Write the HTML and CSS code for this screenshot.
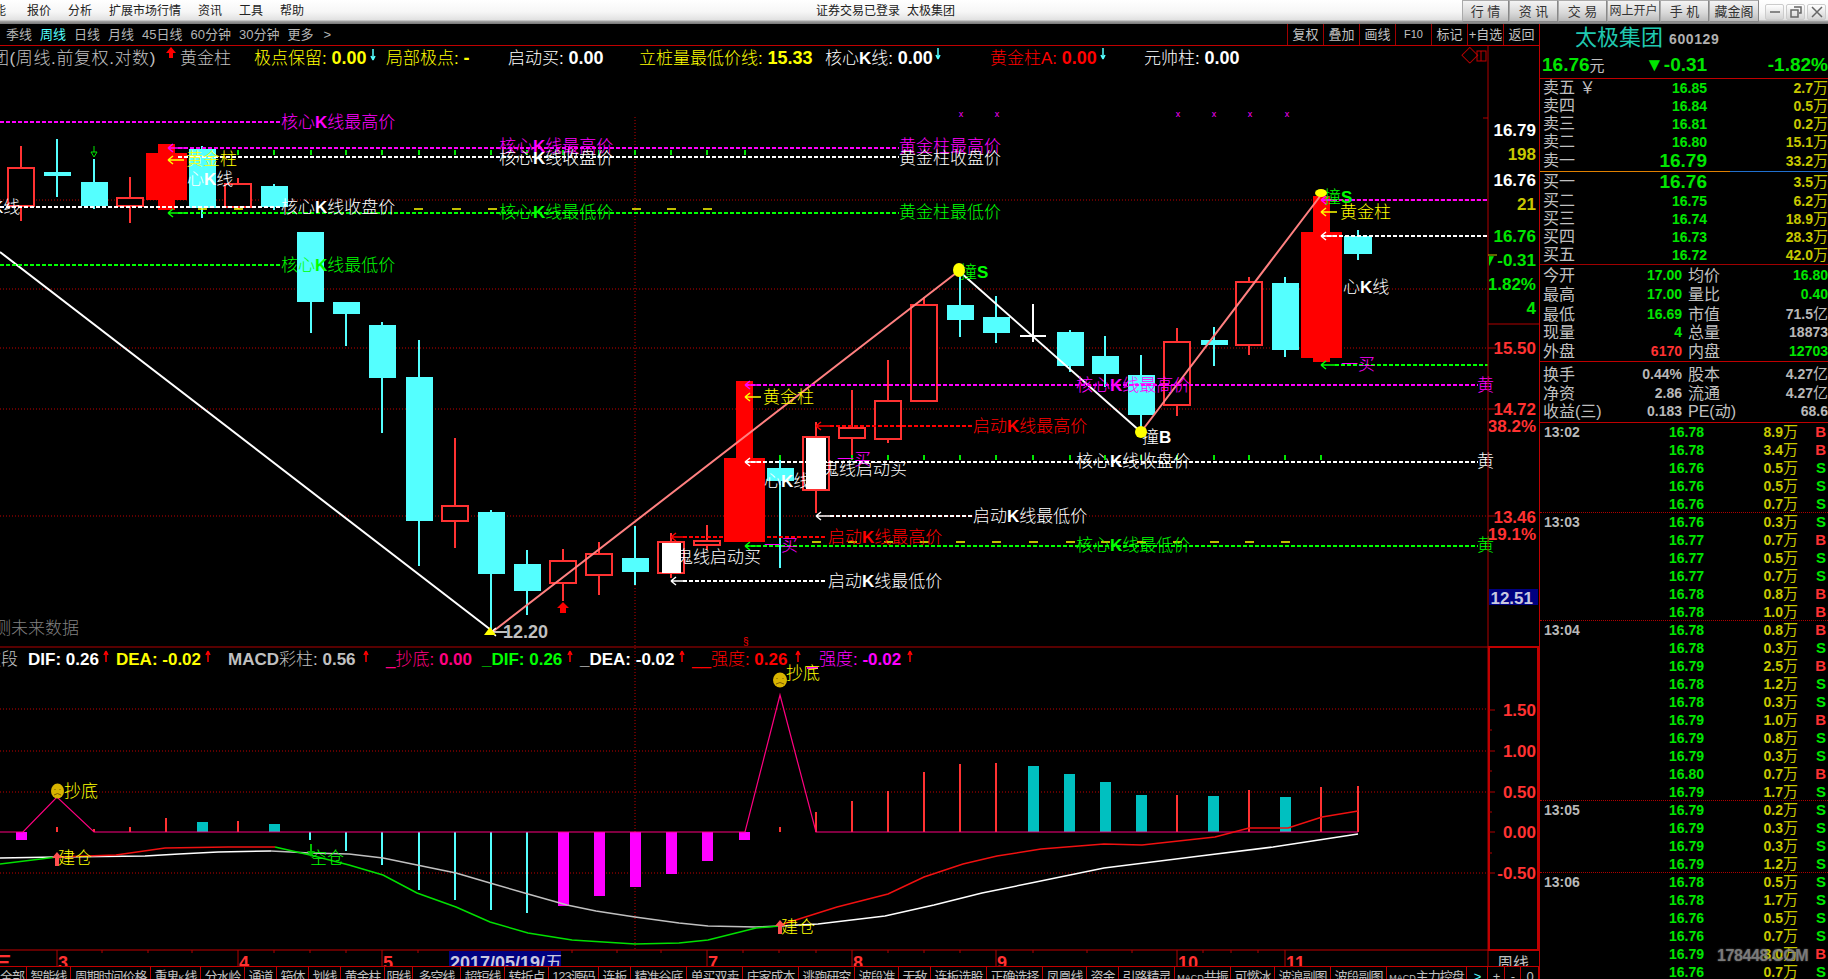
FILE: index.html
```html
<!DOCTYPE html>
<html lang="zh">
<head>
<meta charset="utf-8">
<title>太极集团</title>
<link rel="stylesheet" href="styles.css">
</head>
<body>
<div class="app">
  <header class="titlebar">
    <nav class="menu"><span class="first">功能</span><span>报价</span><span>分析</span><span>扩展市场行情</span><span>资讯</span><span>工具</span><span>帮助</span></nav>
    <div class="wintitle"><span>证券交易已登录</span><span>太极集团</span></div>
    <div class="tbtns">
      <span class="tb w47">行 情</span><span class="tb w49">资 讯</span><span class="tb w49">交 易</span><span class="tb w53">网上开户</span><span class="tb w49">手 机</span><span class="tb w50">藏金阁</span>
    </div>
    <div class="wbtns">
      <span class="wb"><svg width="12" height="12" viewBox="0 0 12 12"><path d="M1 6h10" class="wi"/></svg></span>
      <span class="wb"><svg width="12" height="12" viewBox="0 0 12 12"><path d="M4 1h7v6h-2M1 4h7v7H1z" class="wi"/></svg></span>
      <span class="wb"><svg width="12" height="12" viewBox="0 0 12 12"><path d="M1 1l10 10M11 1L1 11" class="wi"/></svg></span>
    </div>
  </header>
  <div class="body">
    <main class="left">
      <div class="toolbar">
        <div class="periods"><span>季线</span><span class="on">周线</span><span>日线</span><span>月线</span><span>45日线</span><span>60分钟</span><span>30分钟</span><span>更多</span><span class="more">&gt;</span></div>
        <div class="tools"><span>复权</span><span>叠加</span><span>画线</span><span class="f10">F10</span><span>标记</span><span>+自选</span><span>返回</span></div>
      </div>
      <svg class="chart" width="1539" height="920" viewBox="0 46 1539 920">
        <defs>
          <symbol id="al" overflow="visible"><path d="M0 0h16M0 0l5-4M0 0l5 4"/></symbol>
          <symbol id="au" overflow="visible"><path d="M0 0v-11M0-11l-2 4M0-11l2 4"/></symbol>
          <symbol id="ad" overflow="visible"><path d="M0 0v11M0 11l-2-4M0 11l2-4"/></symbol>
        </defs>
        <!-- grid -->
        <path class="grid" d="M0 200H1488M0 289H1488M0 348H1488M0 409H1488M0 516H1488M0 709H1488M0 751H1488M0 792H1488M0 873H1488M635 117V950"/>
        <!-- red and cyan wicks -->
        <path class="wu" d="M21 146V221M130 177V223M238 178V209M455 438V548M563 549V601M599 542V595M671 533V578M707 525V550M816 422V513M852 390V457M888 360V443M924 297V305M1177 328V416M1249 277V355"/>
        <path class="wd" d="M57 139V197M94 159V209M202 146V218M274 184V210M311 232V333M346 302V346M382 322V433M419 340V566M491 510V633M527 550V615M635 526V585M780 455V568M960 265V337M996 296V343M1070 330V372M1105 336V387M1141 355V428M1214 327V366M1285 277V357M1358 230V260"/>
        <g class="up">
          <rect x="8" y="168" width="26" height="38"/><rect x="117" y="198" width="26" height="8"/><rect x="225" y="184" width="26" height="23"/><rect x="442" y="506" width="26" height="15"/><rect x="550" y="561" width="26" height="22"/><rect x="586" y="554" width="26" height="21"/><rect x="658" y="542" width="26" height="31"/><rect x="694" y="541" width="26" height="4"/><rect x="803" y="437" width="26" height="53"/><rect x="839" y="428" width="26" height="10"/><rect x="875" y="401" width="26" height="38"/><rect x="911" y="305" width="26" height="96"/><rect x="1164" y="342" width="26" height="63"/><rect x="1236" y="282" width="26" height="63"/>
        </g>
        <g class="dn">
          <rect x="44" y="172" width="27" height="4"/><rect x="81" y="182" width="27" height="24"/><rect x="189" y="149" width="27" height="59"/><rect x="261" y="186" width="27" height="21"/><rect x="297" y="232" width="27" height="70"/><rect x="333" y="302" width="27" height="12"/><rect x="369" y="325" width="27" height="53"/><rect x="406" y="377" width="27" height="144"/><rect x="478" y="512" width="27" height="62"/><rect x="514" y="564" width="27" height="27"/><rect x="622" y="558" width="27" height="14"/><rect x="767" y="468" width="27" height="13"/><rect x="947" y="305" width="27" height="15"/><rect x="983" y="317" width="27" height="16"/><rect x="1057" y="332" width="27" height="34"/><rect x="1092" y="356" width="27" height="18"/><rect x="1128" y="375" width="27" height="40"/><rect x="1201" y="340" width="27" height="5"/><rect x="1272" y="283" width="27" height="67"/><rect x="1344" y="236" width="28" height="18"/>
        </g>
        <g class="wfill"><rect x="662" y="543" width="19" height="30"/><rect x="806" y="438" width="20" height="51"/></g>
        <path class="wcross" d="M1033 304V342M1020 336H1046"/>
        <g class="rfill">
          <rect x="146" y="153" width="41" height="47"/><rect x="158" y="144" width="17" height="66"/>
          <rect x="724" y="458" width="41" height="84"/><rect x="736" y="381" width="17" height="77"/>
          <rect x="1301" y="232" width="41" height="126"/><rect x="1313" y="196" width="17" height="36"/><rect x="1313" y="358" width="17" height="4"/>
        </g>
        <!-- small marks -->
        <path class="gticks" d="M238 150v5M274 150v5M311 150v5M346 150v5M382 150v5M419 150v5M455 150v5M491 150v5M527 150v5M563 150v5M599 150v5M635 150v5M671 150v5M707 150v5M745 150v5M780 455v5M852 455v5M888 455v5M924 455v5M960 455v5M996 455v5M1033 455v5M1070 455v5M1105 455v5M1141 455v5M1177 455v5M1214 455v5M1249 455v5M1285 455v5M1321 455v5"/>
        <path class="ydash" d="M198 209h9M234 209h9M414 209h9M452 209h9M488 209h9M632 209h9M667 209h9M703 209h9M812 542h9M848 542h9M884 542h9M920 542h9M956 542h9M992 542h9M1029 542h9M1066 542h9M1101 542h9M1137 542h9M1173 542h9M1210 542h9M1245 542h9M1281 542h9"/>
        <g class="xm"><text x="961" y="117">x</text><text x="997" y="117">x</text><text x="1178" y="117">x</text><text x="1214" y="117">x</text><text x="1250" y="117">x</text><text x="1287" y="117">x</text></g>
        <path class="gwk" d="M94 146v6h-3l3 5 3-5h-3"/>
        <polygon class="rarrow" points="563,602 569,608 566,608 566,613 560,613 560,608 557,608"/>
        <!-- trend lines -->
        <path class="tw" d="M0 252L491 630M960 272L1141 432"/>
        <path class="ts" d="M491 633L960 270M1141 432L1321 195"/>
        <!-- level lines -->
        <path class="dm" d="M0 122H280M178 148H899M745 385H1478M1321 200H1488"/>
        <path class="dw" d="M0 207H280M178 157H899M745 462H1478M1321 236H1488M830 516H972M683 581H826"/>
        <path class="dg" d="M0 265H280M178 213H899M745 546H1478M1335 365H1488"/>
        <path class="dr" d="M830 426H972M683 537H826"/>
        <use href="#al" class="sm" x="168" y="148"/><use href="#al" class="sy" x="168" y="160"/><use href="#al" class="sg" x="168" y="213"/>
        <use href="#al" class="sm" x="745" y="385"/><use href="#al" class="sy" x="745" y="397"/><use href="#al" class="sw" x="745" y="462"/><use href="#al" class="sg" x="745" y="546"/>
        <use href="#al" class="sr" x="816" y="426"/><use href="#al" class="sw" x="816" y="516"/><use href="#al" class="sr" x="671" y="537"/><use href="#al" class="sw" x="671" y="581"/>
        <use href="#al" class="sm" x="1321" y="200"/><use href="#al" class="sy" x="1321" y="212"/><use href="#al" class="sw" x="1321" y="236"/><use href="#al" class="sg" x="1321" y="365"/>
        <use href="#al" class="sw" x="491" y="632"/>
        <!-- labels on the price chart -->
        <g class="t">
          <text class="cm" x="281" y="122">核心<tspan class="k">K</tspan>线最高价</text>
          <text class="cm" x="499" y="146">核心<tspan class="k">K</tspan>线最高价</text>
          <text class="cw" x="499" y="158">核心<tspan class="k">K</tspan>线收盘价</text>
          <text class="cw" x="281" y="207">核心<tspan class="k">K</tspan>线收盘价</text>
          <text class="cg" x="499" y="212">核心<tspan class="k">K</tspan>线最低价</text>
          <text class="cg" x="281" y="265">核心<tspan class="k">K</tspan>线最低价</text>
          <text class="cm" x="899" y="146">黄金柱最高价</text>
          <text class="cw" x="899" y="158">黄金柱收盘价</text>
          <text class="cg" x="899" y="212">黄金柱最低价</text>
          <text class="cy" x="186" y="159">黄金柱</text>
          <text class="cw" x="187" y="179">心<tspan class="k">K</tspan>线</text>
          <text class="cw" x="-8" y="207">K线</text>
          <text class="cy" x="763" y="397">黄金柱</text>
          <text class="cw" x="764" y="481">心<tspan class="k">K</tspan>线</text>
          <text class="cw" x="822" y="469">鬼线启动买</text>
          <text class="cw" x="676" y="557">鬼线启动买</text>
          <text class="cm" x="1076" y="385">核心<tspan class="k">K</tspan>线最高价</text>
          <text class="cw" x="1076" y="461">核心<tspan class="k">K</tspan>线收盘价</text>
          <text class="cg" x="1076" y="545">核心<tspan class="k">K</tspan>线最低价</text>
          <text class="cm" x="1477" y="385">黄</text>
          <text class="cw" x="1477" y="461">黄</text>
          <text class="cg" x="1477" y="545">黄</text>
          <text class="cr" x="973" y="426">启动<tspan class="k">K</tspan>线最高价</text>
          <text class="cw" x="973" y="516">启动<tspan class="k">K</tspan>线最低价</text>
          <text class="cr" x="828" y="537">启动<tspan class="k">K</tspan>线最高价</text>
          <text class="cw" x="828" y="581">启动<tspan class="k">K</tspan>线最低价</text>
          <text class="cy" x="1340" y="212">黄金柱</text>
          <text class="cw" x="1343" y="287">心<tspan class="k">K</tspan>线</text>
          <text class="cg" x="960" y="272">撞<tspan class="k">S</tspan></text>
          <text class="cg" x="1324" y="197">撞<tspan class="k">S</tspan></text>
          <text class="cw" x="1142" y="437">撞<tspan class="k">B</tspan></text>
          <text class="cm" x="837" y="459">一买</text>
          <text class="cm" x="764" y="545">一买</text>
          <text class="cm" x="1341" y="364">一买</text>
          <text class="cdim" x="-6" y="628">测未来数据</text>
          <text class="cs bold" x="503" y="632">12.20</text>
        </g>
        <g class="yd"><ellipse cx="959" cy="270" rx="6" ry="7"/><ellipse cx="1141" cy="432" rx="6" ry="6"/><ellipse cx="1321" cy="193" rx="6" ry="4"/><polygon points="490,627 496,635 484,635"/></g>
        <!-- legend of the price chart -->
        <g class="t lg">
          <text class="cs wide" x="-8" y="58">团(周线.前复权.对数)</text>
          <text class="cs" x="180" y="58">黄金柱</text>
          <text class="cy" x="254" y="58">极点保留: <tspan class="n">0.00</tspan></text>
          <text class="cy" x="386" y="58">局部极点: <tspan class="n">-</tspan></text>
          <text class="cw" x="508" y="58">启动买: <tspan class="n">0.00</tspan></text>
          <text class="cy" x="639" y="58">立桩量最低价线: <tspan class="n">15.33</tspan></text>
          <text class="cw" x="825" y="58">核心<tspan class="k">K</tspan>线: <tspan class="n">0.00</tspan></text>
          <text class="cr" x="990" y="58">黄金柱A: <tspan class="n">0.00</tspan></text>
          <text class="cw" x="1144" y="58">元帅柱: <tspan class="n">0.00</tspan></text>
          <text class="cr sym" x="1461" y="56">◇</text>
        </g>
        <rect class="rbox" x="1477" y="51" width="9" height="10"/>
        <path class="rbox" d="M1481 51v10"/>
        <polygon class="rarrow" points="171,47 176,53 173,53 173,58 169,58 169,53 166,53"/>
        <use href="#ad" class="sc" x="373" y="49"/><use href="#ad" class="sc" x="938" y="48"/><use href="#ad" class="sc" x="1103" y="48"/>

        <!-- indicator pane -->
        <path class="frame" d="M0 647H1488"/>
        <g class="t lg">
          <text class="cs" x="-16" y="659">波段</text>
          <text class="cw" x="28" y="659"><tspan class="n2">DIF: 0.26</tspan></text>
          <text class="cy" x="116" y="659"><tspan class="n2">DEA: -0.02</tspan></text>
          <text class="cs" x="228" y="659"><tspan class="n2">MACD</tspan>彩柱: <tspan class="n2">0.56</tspan></text>
          <text class="cp" x="386" y="659">_抄底: <tspan class="n2">0.00</tspan></text>
          <text class="cg" x="482" y="659"><tspan class="n2">_DIF: 0.26</tspan></text>
          <text class="cw" x="580" y="659"><tspan class="n2">_DEA: -0.02</tspan></text>
          <text class="cr" x="692" y="659">__强度: <tspan class="n2">0.26</tspan></text>
          <text class="cm" x="819" y="659">强度: <tspan class="n2">-0.02</tspan></text>
        </g>
        <use href="#au" class="srd" x="106" y="662"/><use href="#au" class="srd" x="208" y="662"/><use href="#au" class="srd" x="366" y="662"/><use href="#au" class="srd" x="570" y="662"/><use href="#au" class="srd" x="682" y="662"/><use href="#au" class="srd" x="798" y="662"/><use href="#au" class="srd" x="910" y="662"/>
        <text class="tiny cr" x="743" y="645">§</text>
        <!-- MACD bars -->
        <path class="bu" d="M57 827V832M94 829V832M130 827V832M166 818V832M238 821V832M780 827V832M816 812V832M852 801V832M888 791V832M924 772V832M960 764V832M996 763V832M1177 795V832M1249 790V832M1321 787V832M1358 786V832"/>
        <path class="bd" d="M310 832V840M346 832V851M382 832V865M419 832V890M455 832V900M491 832V910M527 832V913"/>
        <g class="bt"><rect x="197" y="822" width="11" height="10"/><rect x="269" y="824" width="11" height="8"/><rect x="1028" y="766" width="11" height="66"/><rect x="1064" y="774" width="11" height="58"/><rect x="1100" y="782" width="11" height="50"/><rect x="1136" y="795" width="11" height="37"/><rect x="1208" y="796" width="11" height="36"/><rect x="1280" y="797" width="11" height="35"/></g>
        <g class="bm"><rect x="16" y="832" width="11" height="8"/><rect x="558" y="832" width="11" height="74"/><rect x="594" y="832" width="11" height="64"/><rect x="630" y="832" width="11" height="55"/><rect x="666" y="832" width="11" height="42"/><rect x="702" y="832" width="11" height="29"/><rect x="739" y="832" width="11" height="8"/></g>
        <polyline class="lz" points="0,832 23,832 57,797 94,832 745,832 780,695 816,832 1358,832"/>
        <polyline class="lw" points="0,858 57,857 145,856 179,854 218,852 271,851"/>
        <polyline class="ll" points="271,851 310,853 349,854 383,858 417,865 456,873 490,883 528,894 567,905 596,911 635,917 679,923 708,926 756,927 780,926"/>
        <polyline class="lw" points="780,926 818,924 885,916 934,905 982,893 1031,883 1104,868 1200,856 1273,847 1358,834"/>
        <polyline class="lg1" points="0,864 57,857"/>
        <polyline class="lg1" points="275,847 310,855 349,865 383,875 417,893 456,907 490,922 528,933 572,940 635,944 679,943 708,940 756,928 780,926"/>
        <polyline class="lr" points="57,857 116,855 165,848 228,847 275,847"/>
        <polyline class="lr" points="780,925 837,907 888,894 924,877 963,864 997,856 1041,849 1104,844 1142,845 1215,837 1249,828 1288,828 1322,817 1358,811"/>
        <path class="dmb" d="M807 668H818"/>
        <g class="smile"><ellipse cx="57.500" cy="791" rx="6.500" ry="7.500"/><path d="M55 789v1M60 789v1M54 795q3.500-3 7 0"/></g>
        <g class="smile"><ellipse cx="780" cy="680" rx="7" ry="7.500"/><path d="M777 678v1M783 678v1M776 684q4-3 8 0"/></g>
        <g class="t">
          <text class="cy" x="64" y="791">抄底</text>
          <text class="cy" x="786" y="673">抄底</text>
          <text class="cy" x="58" y="858">建仓</text>
          <text class="cy" x="781" y="927">建仓</text>
          <text class="cg" x="310" y="858">空仓</text>
        </g>
        <polygon class="rarrow lighter" points="57,852 62,858 59,858 59,866 55,866 55,858 52,858"/>
        <polygon class="rarrow lighter" points="780,920 785,926 782,926 782,934 778,934 778,926 775,926"/>
        <polygon class="garrow" points="310,844 312,844 312,851 315,851 311,857 307,851 310,851"/>

        <!-- price axis -->
        <path class="frame" d="M1488 46V966M1488 324H1539M1483 118H1488"/>
        <path class="oline" d="M1488 255H1497"/>
        <path class="frame" d="M1488 348H1496M1488 409H1496M1488 516H1496"/>
        <svg x="1489" y="46" width="50" height="600" viewBox="1489 46 50 600">
          <g class="ax">
            <text class="cw" x="1536" y="130">16.79</text>
            <text class="co" x="1536" y="154">198</text>
            <text class="cw" x="1536" y="180">16.76</text>
            <text class="co" x="1536" y="204">21</text>
            <text class="cg2" x="1536" y="236">16.76</text>
            <text class="cg2" x="1536" y="260">▼-0.31</text>
            <text class="cg2" x="1536" y="284">-1.82%</text>
            <text class="cg2" x="1536" y="308">4</text>
            <text class="cax" x="1536" y="348">15.50</text>
            <text class="cax" x="1536" y="409">14.72</text>
            <text class="cax" x="1536" y="426">38.2%</text>
            <text class="cax" x="1536" y="517">13.46</text>
            <text class="cax" x="1536" y="534">19.1%</text>
          </g>
          <rect class="navy" x="1489" y="589" width="49" height="16"/>
          <text class="ax cb" x="1533" y="598">12.51</text>
        </svg>
        <rect class="thick" x="1489" y="647" width="49" height="303"/>
        <path class="frame" d="M1489 710H1495M1489 730H1492M1489 751H1495M1489 771H1492M1489 792H1495M1489 812H1492M1489 832H1495M1489 853H1492M1489 873H1495"/>
        <g class="ax">
          <text class="cax" x="1536" y="710">1.50</text>
          <text class="cax" x="1536" y="751">1.00</text>
          <text class="cax" x="1536" y="792">0.50</text>
          <text class="cax" x="1536" y="832">0.00</text>
          <text class="cax" x="1536" y="873">-0.50</text>
        </g>
        <!-- date axis -->
        <path class="frame2" d="M0 950H1539"/>
        <path class="frame" d="M57 950V966M238 950V966M382 950V966M707 950V966M852 950V966M996 950V966M1177 950V966M1285 950V966M102 950v3M148 950v3M192 950v3M274 950v3M310 950v3M346 950v3M418 950v3M572 950v3M617 950v3M661 950v3M743 950v3M779 950v3M816 950v3M888 950v3M924 950v3M960 950v3M1033 950v3M1087 950v3M1132 950v3M1203 950v3M1231 950v3M1258 950v3"/>
        <rect class="navy" x="449" y="951" width="112" height="15"/>
        <g class="dt">
          <text class="cr2" x="-6" y="969">三</text>
          <text class="cr2" x="58" y="969">3</text>
          <text class="cr2" x="239" y="969">4</text>
          <text class="cr2" x="383" y="969">5</text>
          <text class="cb" x="450" y="969">2017/05/19/<tspan class="thin">五</tspan></text>
          <text class="cr2" x="708" y="969">7</text>
          <text class="cr2" x="853" y="969">8</text>
          <text class="cr2" x="997" y="969">9</text>
          <text class="cr2" x="1178" y="969">10</text>
          <text class="cr2" x="1286" y="969">11</text>
        </g>
        <text class="wk-label" x="1497" y="969">周线</text>
      </svg>
      <div class="tabs">
        <span class="tab w27 end">全部</span><span class="tab w44">智能线</span><span class="tab w80">周期时间价格</span><span class="tab w50">重鬼<small>K</small>线</span><span class="tab w44">分水岭</span><span class="tab w32">通道</span><span class="tab w32">箱体</span><span class="tab w32">划线</span><span class="tab w44">黄金柱</span><span class="tab w28">阴线</span><span class="tab w48">多空线</span><span class="tab w44">超短线</span><span class="tab w44">转折点</span><span class="tab w50">123源码</span><span class="tab w32">连板</span><span class="tab w56">精准谷底</span><span class="tab w56">单买双卖</span><span class="tab w56">庄家成本</span><span class="tab w56">逃跑研究</span><span class="tab w44">波段准</span><span class="tab w32">无敌</span><span class="tab w56">连板选股</span><span class="tab w56">正确选择</span><span class="tab w44">凤凰线</span><span class="tab w32">资金</span><span class="tab w56">引路精灵</span><span class="tab w56"><small>MACD</small>共振</span><span class="tab w44">可燃冰</span><span class="tab w56">波浪副图</span><span class="tab w56">波段副图</span><span class="tab w80"><small>MACD</small>主力控盘</span><span class="tab w21 teal">&gt;</span><span class="tab w17">+</span><span class="tab w16">-</span><span class="tab w18">0</span>
      </div>
    </main>
    <aside class="quote">
      <div class="qname"><span class="nm">太极集团</span><span class="cd">600129</span></div>
      <div class="qprice"><span class="p1">16.76<i>元</i></span><span class="p2">▼-0.31</span><span class="p3">-1.82%</span></div>
      <section class="book sell">
        <div class="br"><span>卖五 ￥</span><b>16.85</b><em>2.7<i>万</i></em></div>
        <div class="br"><span>卖四</span><b>16.84</b><em>0.5<i>万</i></em></div>
        <div class="br"><span>卖三</span><b>16.81</b><em>0.2<i>万</i></em></div>
        <div class="br"><span>卖二</span><b>16.80</b><em>15.1<i>万</i></em></div>
        <div class="br top"><span>卖一</span><b>16.79</b><em>33.2<i>万</i></em></div>
      </section>
      <div class="bar2"></div>
      <section class="book buy">
        <div class="br top"><span>买一</span><b>16.76</b><em>3.5<i>万</i></em></div>
        <div class="br"><span>买二</span><b>16.75</b><em>6.2<i>万</i></em></div>
        <div class="br"><span>买三</span><b>16.74</b><em>18.9<i>万</i></em></div>
        <div class="br"><span>买四</span><b>16.73</b><em>28.3<i>万</i></em></div>
        <div class="br"><span>买五</span><b>16.72</b><em>42.0<i>万</i></em></div>
      </section>
      <section class="stats">
        <div class="sr"><span>今开</span><b>17.00</b><span>均价</span><b>16.80</b></div>
        <div class="sr"><span>最高</span><b>17.00</b><span>量比</span><b>0.40</b></div>
        <div class="sr"><span>最低</span><b>16.69</b><span>市值</span><b class="g">71.5<i>亿</i></b></div>
        <div class="sr"><span>现量</span><b>4</b><span>总量</span><b class="g">18873</b></div>
        <div class="sr"><span>外盘</span><b class="r">6170</b><span>内盘</span><b>12703</b></div>
      </section>
      <section class="stats gray">
        <div class="sr"><span>换手</span><b class="g">0.44%</b><span>股本</span><b class="g">4.27<i>亿</i></b></div>
        <div class="sr"><span>净资</span><b class="g">2.86</b><span>流通</span><b class="g">4.27<i>亿</i></b></div>
        <div class="sr"><span>收益(三)</span><b class="g">0.183</b><span>PE(动)</span><b class="g">68.6</b></div>
      </section>
      <section class="ticks">
        <div class="tr"><span>13:02</span><b>16.78</b><em>8.9<i>万</i></em><u class="b">B</u></div>
        <div class="tr"><span></span><b>16.78</b><em>3.4<i>万</i></em><u class="b">B</u></div>
        <div class="tr"><span></span><b>16.76</b><em>0.5<i>万</i></em><u>S</u></div>
        <div class="tr"><span></span><b>16.76</b><em>0.5<i>万</i></em><u>S</u></div>
        <div class="tr sep"><span></span><b>16.76</b><em>0.7<i>万</i></em><u>S</u></div>
        <div class="tr"><span>13:03</span><b>16.76</b><em>0.3<i>万</i></em><u>S</u></div>
        <div class="tr"><span></span><b>16.77</b><em>0.7<i>万</i></em><u class="b">B</u></div>
        <div class="tr"><span></span><b>16.77</b><em>0.5<i>万</i></em><u>S</u></div>
        <div class="tr"><span></span><b>16.77</b><em>0.7<i>万</i></em><u>S</u></div>
        <div class="tr"><span></span><b>16.78</b><em>0.8<i>万</i></em><u class="b">B</u></div>
        <div class="tr sep"><span></span><b>16.78</b><em>1.0<i>万</i></em><u class="b">B</u></div>
        <div class="tr"><span>13:04</span><b>16.78</b><em>0.8<i>万</i></em><u class="b">B</u></div>
        <div class="tr"><span></span><b>16.78</b><em>0.3<i>万</i></em><u>S</u></div>
        <div class="tr"><span></span><b>16.79</b><em>2.5<i>万</i></em><u class="b">B</u></div>
        <div class="tr"><span></span><b>16.78</b><em>1.2<i>万</i></em><u>S</u></div>
        <div class="tr"><span></span><b>16.78</b><em>0.3<i>万</i></em><u>S</u></div>
        <div class="tr"><span></span><b>16.79</b><em>1.0<i>万</i></em><u class="b">B</u></div>
        <div class="tr"><span></span><b>16.79</b><em>0.8<i>万</i></em><u>S</u></div>
        <div class="tr"><span></span><b>16.79</b><em>0.3<i>万</i></em><u>S</u></div>
        <div class="tr"><span></span><b>16.80</b><em>0.7<i>万</i></em><u class="b">B</u></div>
        <div class="tr sep"><span></span><b>16.79</b><em>1.7<i>万</i></em><u>S</u></div>
        <div class="tr"><span>13:05</span><b>16.79</b><em>0.2<i>万</i></em><u>S</u></div>
        <div class="tr"><span></span><b>16.79</b><em>0.3<i>万</i></em><u>S</u></div>
        <div class="tr"><span></span><b>16.79</b><em>0.3<i>万</i></em><u>S</u></div>
        <div class="tr sep"><span></span><b>16.79</b><em>1.2<i>万</i></em><u>S</u></div>
        <div class="tr"><span>13:06</span><b>16.78</b><em>0.5<i>万</i></em><u>S</u></div>
        <div class="tr"><span></span><b>16.78</b><em>1.7<i>万</i></em><u>S</u></div>
        <div class="tr"><span></span><b>16.76</b><em>0.5<i>万</i></em><u>S</u></div>
        <div class="tr"><span></span><b>16.76</b><em>0.7<i>万</i></em><u>S</u></div>
        <div class="tr"><span></span><b>16.79</b><em>3.0<i>万</i></em><u class="b">B</u></div>
        <div class="tr"><span></span><b>16.76</b><em>0.7<i>万</i></em><u>S</u></div>
      </section>
      <div class="watermark">178448.COM</div>
    </aside>
  </div>
</div>
</body>
</html>
```

FILE: styles.css
```css
* { box-sizing: border-box; }
html, body { margin: 0; padding: 0; background: #000; }
body { font-family: "Liberation Sans", "Noto Sans CJK SC", sans-serif; color: #c0c0c0; }
.app { width: 1828px; height: 979px; overflow: hidden; display: flex; flex-direction: column; background: #000; }

/* title bar */
.titlebar { flex: none; height: 24px; display: flex; align-items: flex-start; color: #222; font-size: 12px; overflow: hidden;
  background: linear-gradient(#fff 0, #f6f6f6 50%, #e2e2e2 82%, #9a9a9a 90%, #777 100%); }
.menu { width: 816px; flex: none; display: flex; gap: 17px; padding: 3px 0 0 0; line-height: 16px; }
.menu .first { margin: 0 4px 0 -18px; }
.wintitle { width: 646px; flex: none; display: flex; gap: 7px; padding-top: 3px; line-height: 16px; }
.tbtns { display: flex; height: 22px; flex: none; }
.tb { display: block; text-align: center; font-size: 13px; line-height: 21px; color: #333; white-space: nowrap;
  background: linear-gradient(#f4f4f4, #d8d8d8 60%, #bbb); border: 1px solid #aaa; border-right-color: #888; border-bottom-color: #888; }
.w47 { width: 47px; } .w49 { width: 49px; } .w53 { width: 53px; } .w50 { width: 50px; }
.tb.w53 { font-size: 12px; }
.wbtns { flex: 1; display: flex; gap: 2px; padding: 4px 0 0 6px; }
.wb { width: 19px; height: 16px; display: flex; align-items: center; justify-content: center; border-radius: 2px;
  background: linear-gradient(#fff, #d4d4d4); border: 1px solid #ccc; }
.wi { fill: none; stroke: #666; stroke-width: 1.5; }

.body { flex: 1; display: flex; min-height: 0; }
.left { width: 1539px; flex: none; display: flex; flex-direction: column; }

/* period bar */
.toolbar { flex: none; height: 22px; display: flex; justify-content: space-between; border-bottom: 1px solid #c00000; }
.periods { display: flex; gap: 8px; padding-left: 6px; font-size: 13px; line-height: 21px; color: #b4b4b4; white-space: nowrap; }
.periods .on { color: #54ffff; }
.periods .more { margin-left: 2px; }
.tools { display: flex; font-size: 13px; line-height: 21px; color: #c0c0c0; }
.tools span { width: 36px; text-align: center; border-left: 1px solid #a00000; white-space: nowrap; }
.tools .f10 { font-size: 11px; }

/* chart canvas */
.chart { display: block; flex: none; overflow: hidden; background: #000; }
.grid { fill: none; stroke: #c00000; stroke-width: 1; stroke-dasharray: 1 2; }
.wu, .bu { fill: none; stroke: #ff3232; stroke-width: 2; }
.wd { fill: none; stroke: #54ffff; stroke-width: 2; }
.up rect { fill: #000; stroke: #ff3232; stroke-width: 2; }
.dn rect { fill: #54ffff; }
.wfill rect { fill: #fff; }
.rfill rect { fill: #ff0000; }
.wcross { fill: none; stroke: #fff; stroke-width: 2; }
.gticks { fill: none; stroke: #00e600; stroke-width: 2; }
.ydash { fill: none; stroke: #ffff00; stroke-width: 1.5; }
.xm text { fill: #ff00ff; font: 9px "Liberation Sans", sans-serif; text-anchor: middle; }
.gwk { fill: none; stroke: #00e600; stroke-width: 1; }
.yd ellipse, .yd polygon { fill: #ffff00; }
.rarrow { fill: #ff0000; }
.rarrow.lighter { fill: #ff5050; }
.garrow { fill: #00c000; }
.tw { fill: none; stroke: #fff; stroke-width: 2; }
.ts { fill: none; stroke: #ff8080; stroke-width: 2; }
.dm, .dw, .dg, .dr, .dmb { fill: none; stroke-width: 2; stroke-dasharray: 4 2; }
.dm { stroke: #ff00ff; } .dw { stroke: #fff; } .dg { stroke: #00ff00; } .dr { stroke: #f00; }
.dmb { stroke: #ff00ff; stroke-dasharray: none; }
use { fill: none; stroke-width: 1.5; }
.sm { stroke: #ff00ff; } .sy { stroke: #ffff00; } .sg { stroke: #00ff00; } .sw { stroke: #fff; } .sr { stroke: #f00; } .sc { stroke: #54ffff; } .srd { stroke: #f00; }

.t text { font-family: "Liberation Sans", "Noto Sans CJK SC", sans-serif; font-size: 17px; font-weight: 300; dominant-baseline: central; }
.t .k { font-weight: 700; }
.t .bold { font-weight: 700; font-size: 18px; }
.t .wide { letter-spacing: .6px; }
.lg .n { font-weight: 700; font-size: 18px; }
.lg .n2 { font-size: 17px; font-weight: 700; }
.sym { font-size: 14px; }
.tiny { font-size: 10px; font-family: "Liberation Sans", sans-serif; }
.cw { fill: #fff; } .cy { fill: #ffff00; } .cg { fill: #00ff00; } .cm { fill: #ff00ff; } .cr { fill: #ff0000; } .cs { fill: #c0c0c0; } .cp { fill: #ff0080; } .cdim { fill: #808080; }
.rbox { fill: none; stroke: #c00000; stroke-width: 1; }

.frame { fill: none; stroke: #b00000; stroke-width: 1; }
.frame2 { fill: none; stroke: #c00000; stroke-width: 1; }
.oline { fill: none; stroke: #c8c800; stroke-width: 1; }
.thick { fill: none; stroke: #c00000; stroke-width: 2; }
.navy { fill: #000080; stroke: #c00000; stroke-width: 0; }
.bd { fill: none; stroke: #54ffff; stroke-width: 2; }
.bt rect { fill: #00c0c0; }
.bm rect { fill: #ff00ff; }
.lz { fill: none; stroke: #ff0080; stroke-width: 1.2; }
.lw { fill: none; stroke: #fff; stroke-width: 1.5; }
.ll { fill: none; stroke: #c0c0c0; stroke-width: 1.5; }
.lg1 { fill: none; stroke: #00e000; stroke-width: 1.5; }
.lr { fill: none; stroke: #f01010; stroke-width: 1.5; }
.smile ellipse { fill: #d8b400; }
.smile path { fill: none; stroke: #7a5a00; stroke-width: 1; }

.ax text, text.ax { font-family: "Liberation Sans", sans-serif; font-size: 17px; font-weight: 700; text-anchor: end; dominant-baseline: central; }
.co { fill: #c8c800; } .cg2 { fill: #00e600; } .cax { fill: #ff3232; } .cb { fill: #c8c8e0; }
.dt text { font-family: "Liberation Sans", "Noto Sans CJK SC", sans-serif; font-size: 18px; font-weight: 700; }
.cr2 { fill: #ff3232; }
.dt .thin { font-weight: 400; }
.wk-label { font-family: "Noto Sans CJK SC", sans-serif; font-size: 16px; fill: #c0c0c0; }

/* tab bar */
.tabs { flex: none; height: 13px; display: flex; overflow: hidden; border-top: 1px solid #c00000; font-size: 13px; letter-spacing: -1px; line-height: 20px; color: #c0c0c0; }
.tab { display: block; flex: none; text-align: center; white-space: nowrap; overflow: hidden; border-right: 1px solid #c00000; }
.tab small { font-size: 9px; letter-spacing: 0; }
.tab.end { text-align: right; padding-right: 3px; }
.tab.teal { color: #54ffff; }
.w16 { width: 16px; } .w17 { width: 17px; } .w18 { width: 18px; } .w21 { width: 21px; } .w27 { width: 27px; } .w28 { width: 28px; } .w32 { width: 32px; } .w44 { width: 44px; } .w48 { width: 48px; } .w56 { width: 56px; } .w80 { width: 80px; }
.tab.w50 { width: 50px; }

/* quote panel */
.quote { position: relative; flex: 1; min-width: 0; border-left: 1px solid #c00000; overflow: hidden; height: 955px; }
.quote i { font-style: normal; font-weight: 400; }
.qname { height: 28px; display: flex; align-items: center; padding: 0 0 0 35px; gap: 6px; }
.nm { color: #20c8b0; font-size: 22px; line-height: 28px; }
.cd { color: #b0b0b0; font-size: 14px; font-weight: 700; letter-spacing: .6px; padding-top: 2px; }
.qprice { height: 27px; display: grid; grid-template-columns: 103px 100px 83px; align-items: center; padding-left: 2px; color: #00e600; font-size: 19px; font-weight: 700; border-bottom: 1px solid #c00000; }
.qprice i { color: #c0c0c0; font-size: 15px; }
.p2 { white-space: nowrap; }
.p3 { text-align: right; white-space: nowrap; }

.book { display: flex; flex-direction: column; }
.br { height: 18px; display: grid; grid-template-columns: 70px 97px 121px; align-items: center; font-size: 16px; line-height: 18px; }
.br.top { height: 20px; }
.br span { padding-left: 3px; color: #c0c0c0; white-space: nowrap; }
.br b { text-align: right; color: #00e600; font-size: 14px; }
.br.top b { font-size: 19px; }
.br em { text-align: right; font-style: normal; font-weight: 700; font-size: 14px; color: #c8c800; white-space: nowrap; }
.br em i { font-size: 15px; }
.bar2 { height: 1px; background: linear-gradient(90deg, #e08000 0, #e08000 66%, #2070d0 66%, #2070d0 100%); }
.buy { border-bottom: 1px solid #a00000; height: 93px; }

.stats { border-bottom: 1px solid #c00000; display: flex; flex-direction: column; padding-top: 1px; }
.stats.gray { height: 61px; padding-top: 2px; }
.sr { height: 19px; display: grid; grid-template-columns: 70px 72px 70px 76px; align-items: center; font-size: 16px; line-height: 19px; color: #c0c0c0; white-space: nowrap; }
.sr span { padding-left: 3px; }
.sr span:nth-child(3) { padding-left: 6px; }
.sr b { text-align: right; font-size: 14px; color: #00e600; }
.sr b i { font-size: 15px; }
.sr .g { color: #b8b8b8; }
.sr .r { color: #ff3232; }

.ticks { display: flex; flex-direction: column; }
.tr { height: 18px; flex: none; display: grid; grid-template-columns: 70px 94px 94px 30px; align-items: center; font-size: 14px; line-height: 18px; font-weight: 700; }
.tr.sep { border-bottom: 1px dotted #b00000; }
.tr span { padding-left: 4px; color: #b8b8b8; }
.tr b { text-align: right; color: #00e600; }
.tr em { text-align: right; font-style: normal; color: #c8c800; white-space: nowrap; }
.tr em i { font-size: 15px; }
.tr u { text-decoration: none; text-align: right; color: #00e600; font-size: 15px; padding-right: 2px; }
.tr u.b { color: #ff3232; }

.watermark { position: absolute; left: 177px; top: 923px; font-size: 16px; letter-spacing: -.4px; font-weight: 700; color: #909090; opacity: .85; white-space: nowrap; text-shadow: 0 0 2px #666; }
```
